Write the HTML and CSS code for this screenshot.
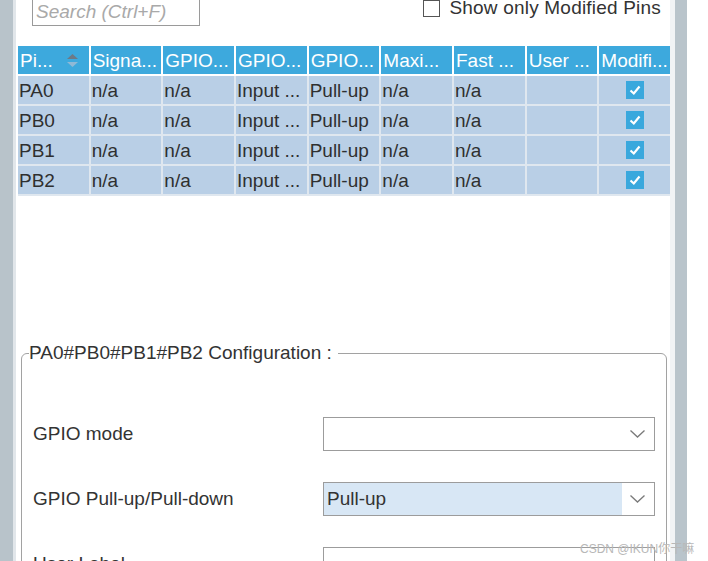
FILE: index.html
```html
<!DOCTYPE html>
<html>
<head>
<meta charset="utf-8">
<link rel="stylesheet" href="styles.css">
</head>
<body>
<div class="app">
  <div class="lbar"></div>
  <div class="main">
    <div class="toolbar">
      <div class="search">Search (Ctrl+F)</div>
      <label class="chk"><span class="box"></span><span>Show only Modified Pins</span></label>
    </div>
    <div class="grid head">
      <div class="hc sort"><span>Pi...</span>
        <svg class="sorticon" width="11" height="13" viewBox="0 0 11 13"><polygon points="0,5 5.5,0 11,5" fill="#6d7a86"/><polygon points="0,8 5.5,13 11,8" fill="#8fb9d6"/></svg>
      </div>
      <div class="hc">Signa...</div>
      <div class="hc">GPIO...</div>
      <div class="hc">GPIO...</div>
      <div class="hc">GPIO...</div>
      <div class="hc">Maxi...</div>
      <div class="hc">Fast ...</div>
      <div class="hc">User ...</div>
      <div class="hc">Modifi...</div>
    </div>
    <div class="grid body">
      <div class="c">PA0</div><div class="c">n/a</div><div class="c">n/a</div><div class="c">Input ...</div><div class="c">Pull-up</div><div class="c">n/a</div><div class="c">n/a</div><div class="c"></div><div class="c ck"><span class="tick"><svg width="18" height="18" viewBox="0 0 18 18"><polyline points="4.5,9.5 7.8,12.5 13.5,5.5" fill="none" stroke="#fff" stroke-width="2.2"/></svg></span></div>
      <div class="c">PB0</div><div class="c">n/a</div><div class="c">n/a</div><div class="c">Input ...</div><div class="c">Pull-up</div><div class="c">n/a</div><div class="c">n/a</div><div class="c"></div><div class="c ck"><span class="tick"><svg width="18" height="18" viewBox="0 0 18 18"><polyline points="4.5,9.5 7.8,12.5 13.5,5.5" fill="none" stroke="#fff" stroke-width="2.2"/></svg></span></div>
      <div class="c">PB1</div><div class="c">n/a</div><div class="c">n/a</div><div class="c">Input ...</div><div class="c">Pull-up</div><div class="c">n/a</div><div class="c">n/a</div><div class="c"></div><div class="c ck"><span class="tick"><svg width="18" height="18" viewBox="0 0 18 18"><polyline points="4.5,9.5 7.8,12.5 13.5,5.5" fill="none" stroke="#fff" stroke-width="2.2"/></svg></span></div>
      <div class="c">PB2</div><div class="c">n/a</div><div class="c">n/a</div><div class="c">Input ...</div><div class="c">Pull-up</div><div class="c">n/a</div><div class="c">n/a</div><div class="c"></div><div class="c ck"><span class="tick"><svg width="18" height="18" viewBox="0 0 18 18"><polyline points="4.5,9.5 7.8,12.5 13.5,5.5" fill="none" stroke="#fff" stroke-width="2.2"/></svg></span></div>
    </div>
    <fieldset class="config">
      <legend>PA0#PB0#PB1#PB2 Configuration :</legend>
      <div class="form">
        <div class="lbl">GPIO mode</div>
        <div class="select"><span class="val"></span><span class="arrow"><svg width="15" height="8" viewBox="0 0 15 8"><polyline points="0.5,0.5 7.5,7 14.5,0.5" fill="none" stroke="#7a7a7a" stroke-width="1.3"/></svg></span></div>
        <div class="lbl">GPIO Pull-up/Pull-down</div>
        <div class="select"><span class="val sel">Pull-up</span><span class="arrow"><svg width="15" height="8" viewBox="0 0 15 8"><polyline points="0.5,0.5 7.5,7 14.5,0.5" fill="none" stroke="#7a7a7a" stroke-width="1.3"/></svg></span></div>
        <div class="lbl">User Label</div>
        <div class="select"><span class="val"></span></div>
      </div>
    </fieldset>
  </div>
  <div class="strip"></div>
  <div class="rbar"></div>
</div>
<div class="wm">CSDN @IKUN你干嘛</div>
</body>
</html>
```
FILE: styles.css
```css
html, body {
  margin: 0;
  padding: 0;
  background: #fff;
}
body {
  width: 708px;
  height: 561px;
  overflow: hidden;
  position: relative;
  font-family: "Liberation Sans", Arial, sans-serif;
  font-size: 19px;
  color: #333;
}
.app {
  display: flex;
  height: 561px;
}
.lbar {
  width: 13px;
  background: #b8c3ca;
  border-right: 3px solid #e1e6ea;
}
.main {
  width: 654px;
  background: #fff;
}
.strip {
  width: 5px;
  background: #f1f3f5;
}
.rbar {
  width: 12px;
  background: #b9c4cb;
}
.toolbar {
  display: flex;
  justify-content: space-between;
  align-items: flex-start;
  margin-top: -3px;
  padding: 0 9px 0 16px;
}
.search {
  box-sizing: border-box;
  width: 168px;
  height: 29px;
  border: 1px solid #9a9a9a;
  padding: 1px 3px 0;
  font-style: italic;
  color: #a9a9a9;
  line-height: 26px;
}
.chk {
  display: flex;
  align-items: center;
  gap: 9px;
  color: #333;
  line-height: 22px;
  letter-spacing: 0.2px;
}
.box {
  box-sizing: border-box;
  width: 17px;
  height: 17px;
  border: 1px solid #555;
  background: #fff;
}
.grid {
  display: grid;
  grid-template-columns: repeat(9, 1fr);
  gap: 2px;
  width: 652px;
  margin-left: 2px;
}
.head {
  margin-top: 20px;
  background: #fff;
  padding-bottom: 2px;
}
.hc {
  background: #3da9dd;
  color: #fff;
  height: 28px;
  line-height: 29px;
  padding-left: 2px;
  white-space: nowrap;
  overflow: hidden;
}
.sort {
  display: flex;
  justify-content: space-between;
  align-items: center;
  padding-right: 11px;
}
.sorticon {
  display: block;
}
.body {
  background: #dfe7ef;
  padding-bottom: 2px;
}
.c {
  background: #b9cfe6;
  height: 28px;
  line-height: 29px;
  padding-left: 1px;
  white-space: nowrap;
  overflow: hidden;
  color: #2f2f2f;
}
.ck {
  display: flex;
  align-items: center;
  justify-content: center;
  padding-left: 0;
}
.tick {
  display: block;
  width: 18px;
  height: 18px;
  background: #3aa8dd;
}
.tick svg {
  display: block;
}
.config {
  margin: 147px 3px 0 5px;
  padding: 0 0 0 7px;
  border: 1px solid #a2a2a2;
  border-radius: 6px;
  min-height: 260px;
}
.config legend {
  padding: 0 6px 0 0;
  line-height: 20px;
  color: #333;
}
.form {
  display: grid;
  grid-template-columns: 290px 332px;
  row-gap: 31px;
  padding-left: 4px;
  margin-top: 54px;
}
.lbl {
  height: 34px;
  line-height: 34px;
  color: #333;
}
.select {
  box-sizing: border-box;
  height: 34px;
  border: 1px solid #9c9c9c;
  display: flex;
  background: #fff;
}
.val {
  flex: 1;
  padding-left: 3px;
  line-height: 32px;
  color: #333;
}
.val.sel {
  background: #d8e7f5;
}
.arrow {
  width: 31px;
  display: flex;
  align-items: center;
  justify-content: center;
  padding-right: 1px;
}
.arrow svg {
  display: block;
}
.wm {
  position: absolute;
  left: 580px;
  top: 539px;
  font-size: 12px;
  color: #b8b8b8;
  font-family: "Liberation Sans", "Noto Sans CJK SC", sans-serif;
  white-space: nowrap;
}
```
